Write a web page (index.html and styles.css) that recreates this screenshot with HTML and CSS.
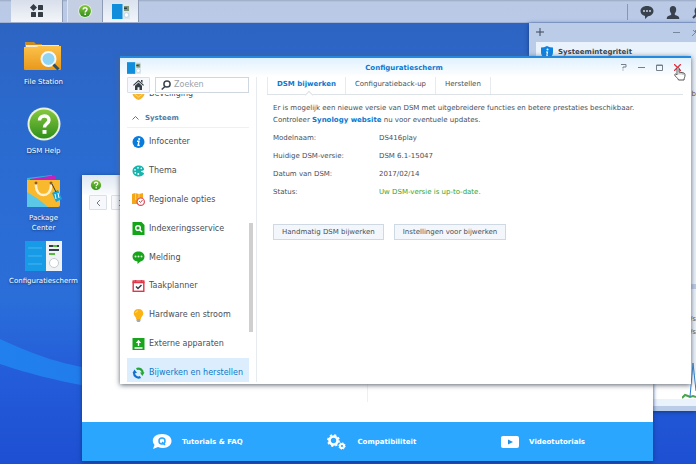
FILE: index.html
```html
<!DOCTYPE html>
<html lang="nl">
<head>
<meta charset="utf-8">
<meta name="viewport" content="width=device-width, initial-scale=1">
<title>Configuratiescherm</title>
<link rel="stylesheet" href="styles.css">
</head>
<body>
<svg class="defs" aria-hidden="true">
  <defs>
    <linearGradient id="green" x1="0" y1="0" x2="0" y2="1"><stop offset="0" stop-color="#86c83e"/><stop offset="1" stop-color="#2f8f1c"/></linearGradient>
    <linearGradient id="folder" x1="0" y1="0" x2="0" y2="1"><stop offset="0" stop-color="#fcc24a"/><stop offset="1" stop-color="#e9981b"/></linearGradient>
    <linearGradient id="wave" x1="0" y1="0" x2="1" y2="0"><stop offset="0" stop-color="#2180ee"/><stop offset="1" stop-color="#2373e6"/></linearGradient>
    <symbol id="help" viewBox="0 0 34 34"><circle cx="17" cy="17" r="16.5" fill="#e8f2df"/><circle cx="17" cy="17" r="14.5" fill="url(#green)"/><path d="M12.500 13.500c0-6 9.500-6 9.500-.5 0 3.800-4.500 3.500-4.500 7.500" fill="none" stroke="#fff" stroke-width="3.400"/><rect x="15.500" y="23" width="4" height="3.800" fill="#fff"/></symbol>
    <symbol id="panel" viewBox="0 0 37 30"><rect width="37" height="30" fill="#eef2f4"/><rect width="21" height="30" fill="#189be6"/><path d="M3 7h14M3 15h14M3 23h14" stroke="#47b6f0" stroke-width="1"/><path d="M24 5h10M24 9h10" stroke="#333e49" stroke-width="2"/><path d="M28 5h4M24 13h6" stroke="#54b93c" stroke-width="2"/><circle cx="29" cy="22" r="4.500" fill="#fff" stroke="#c3ccd2"/></symbol>
    <symbol id="panel-small" viewBox="0 0 18 15"><rect width="18" height="15" fill="#dde7ec"/><rect width="10.500" height="15" fill="#118edb"/><rect x="12" y="2" width="5" height="5" fill="#7d9477"/><rect x="12" y="3.500" width="3" height="1.500" fill="#333f48"/><circle cx="14.500" cy="11" r="2.300" fill="#fff" stroke="#a5c6d8" stroke-width=".6"/></symbol>
  </defs>
</svg>

<div class="desktop">
  <svg class="wallpaper" viewBox="0 0 696 464" preserveAspectRatio="none" aria-hidden="true"><path d="M0 339C35 355 63 366 110 371S220 380 280 360V390H110C60 382 30 374 0 364z" fill="url(#wave)"/></svg>

  <header class="taskbar">
    <button class="task task-main" aria-label="Hoofdmenu"><svg width="14" height="14" viewBox="0 0 14 14" fill="#343c46"><path d="M3.500 0 7 3.500 3.500 7 0 3.500z"/><rect x="8" y="1" width="5" height="5" rx=".6"/><rect x="1" y="8" width="5" height="5" rx=".6"/><rect x="8" y="8" width="5" height="5" rx=".6"/></svg></button>
    <button class="task task-help" aria-label="DSM Help"><svg width="14" height="14"><use href="#help"/></svg></button>
    <button class="task task-on" aria-label="Configuratiescherm"><svg width="18" height="15"><use href="#panel-small"/></svg></button>
    <div class="tray">
      <button class="plain" aria-label="Meldingen"><svg width="14" height="13" viewBox="0 0 14 13"><path d="M7 0c3.900 0 6.500 2.200 6.500 5S11 10 8 10.300L5 13v-3C2.300 9.500.5 7.600.5 5 .5 2.200 3.100 0 7 0z" fill="#39414c"/><g fill="#c7d3e5"><circle cx="4" cy="5" r="1"/><circle cx="7" cy="5" r="1"/><circle cx="10" cy="5" r="1"/></g></svg></button>
      <button class="plain" aria-label="Opties"><svg width="14" height="13" viewBox="0 0 14 13"><path d="M7 0c2 0 3.200 1.400 3.200 3.500S9.300 7 8.700 7.700c0 1.300.6 1.500 1.800 1.900 1.600.5 2.800 1 2.800 3.400H.7c0-2.400 1.200-2.900 2.800-3.400 1.200-.4 1.800-.6 1.800-1.900C4.700 7 3.800 5.600 3.800 3.500S5 0 7 0z" fill="#39414c"/></svg></button>
      <button class="plain tray-search" aria-label="Zoeken"><svg width="14" height="14" viewBox="0 0 14 14" fill="none" stroke="#39414c" stroke-width="2"><circle cx="8" cy="6" r="4.500"/><path d="m5 9-4 4"/></svg></button>
    </div>
  </header>

  <nav class="shortcuts" aria-label="Bureaublad">
    <a class="shortcut" href="#files"><svg width="38" height="32" viewBox="0 0 38 32"><path d="M1 2h9l2 2h6v3H1z" fill="#c98a20"/><path d="M2 5h33v5H2z" fill="#f4ead0"/><path d="M0 7h12l3-1h22v23q0 1-1 1H1q-1 0-1-1z" fill="url(#folder)"/><circle cx="24.500" cy="19" r="7" fill="#8fd4f2" stroke="#f4f8fa" stroke-width="2"/><path d="m29.500 24.500 5 5" stroke="#31505d" stroke-width="3"/></svg>File Station</a>
    <a class="shortcut" href="#help-app"><svg width="34" height="34"><use href="#help"/></svg>DSM Help</a>
    <a class="shortcut" href="#packages"><svg width="36" height="34" viewBox="0 0 36 34"><path d="m1 4 25-3v8H1z" fill="#28b8dc"/><path d="m4 5 26-4v9H4z" fill="#c322bd"/><path d="M1 6h33v25q0 2-2 2H3q-2 0-2-2z" fill="#f9b92e"/><path d="M1 18q11 6 21 15H1z" fill="#5bc8e8"/><path d="M10 9v3c0 12 15 12 15 0V9" fill="none" stroke="#fff2d4" stroke-width="2.500"/><circle cx="10" cy="9" r="1.500" fill="#8f5c12"/><circle cx="25" cy="9" r="1.500" fill="#8f5c12"/><path d="m26 19 6-3 4 9-6 3z" fill="#1ba4d8"/><path d="m29 20 1 5m2-6 1 5" stroke="#fff"/><path d="m26 10 4 8" stroke="#333"/></svg>Package<br>Center</a>
    <a class="shortcut" href="#control"><svg width="37" height="30"><use href="#panel"/></svg>Configuratiescherm</a>
  </nav>

  <aside class="widgets">
    <div class="widgets-bar"><button class="plain" aria-label="Toevoegen"><svg width="8" height="8" viewBox="0 0 8 8"><path d="M4 0v8M0 4h8" stroke="#3c4654"/></svg></button><button class="plain widgets-min" aria-label="Minimaliseren"><svg width="7" height="7" viewBox="0 0 7 7"><path d="M0 3.500h7" stroke="#76869b"/></svg></button><button class="plain" aria-label="Vastzetten"><svg width="8" height="8" viewBox="0 0 8 8"><path d="m0 8 3-3M1 2l5 5M3 3l3-3 2 2-3 3z" stroke="#76869b" fill="none"/></svg></button></div>
    <section class="card card-health"><svg width="12" height="13" viewBox="0 0 12 13"><path d="M6 0q3 1.500 6 1.500V6c0 4-3 6-6 7C3 12 0 10 0 6V1.500Q3 1.500 6 0z" fill="#0e82e0"/><circle cx="6.500" cy="3.500" r="1" fill="#fff"/><path d="M5 6h1.500L5.800 9.500H7" stroke="#fff" fill="none" stroke-width="1.200"/></svg><h2>Systeemintegriteit</h2><span class="sliver">b</span></section>
    <section class="card card-load"><div class="rates"><span>/s</span><span>/s</span></div><svg class="chart" width="14" height="38" viewBox="0 0 14 38" fill="none"><path d="m0 37 3-3 3 1 2 1 3-1 3 1" stroke="#49a34f" stroke-width="2"/><path d="M8 36 11 2l3 28" stroke="#2a7fd0"/></svg></section>
  </aside>

  <section class="window help-window" aria-label="DSM Help">
    <div class="help-title"><svg width="12" height="12"><use href="#help"/></svg></div>
    <div class="help-tools"><button class="square" aria-label="Vorige"><svg width="5" height="8" viewBox="0 0 5 8"><path d="M4 1 1 4l3 3" fill="none" stroke="#717983"/></svg></button><button class="square" aria-label="Volgende"><svg width="5" height="8" viewBox="0 0 5 8"><path d="m1 1 3 3-3 3" fill="none" stroke="#717983"/></svg></button></div>
    <div class="help-body"></div>
    <footer class="help-links">
      <a href="#faq"><svg width="20" height="16" viewBox="0 0 20 16"><path d="M10 0c6 0 9.500 3 9.500 7S16 14 11 14q-3 0-5-1l-5 2 1.500-4Q.8 9 .8 7c0-4 3.200-7 9.200-7z" fill="#fff"/><circle cx="10" cy="7" r="3" fill="none" stroke="#2aa6ff" stroke-width="1.500"/><path d="m10 8 3 3" stroke="#2aa6ff" stroke-width="1.500"/></svg>Tutorials &amp; FAQ</a>
      <a href="#compat"><svg width="20" height="16" viewBox="0 0 20 16" fill="none" stroke="#fff"><circle cx="6.500" cy="6.500" r="4" stroke-width="2.600"/><circle cx="6.500" cy="6.500" r="5.600" stroke-width="1.600" stroke-dasharray="2.200 2.200"/><circle cx="15" cy="12" r="2.100" stroke-width="2"/><circle cx="15" cy="12" r="3.200" stroke-width="1" stroke-dasharray="1.250 1.250"/></svg>Compatibiliteit</a>
      <a href="#video"><svg width="18" height="12" viewBox="0 0 18 12"><rect width="18" height="12" rx="2" fill="#fff"/><path d="m7 3.500 5 2.500-5 2.500z" fill="#2292e8"/></svg>Videotutorials</a>
    </footer>
  </section>

  <main class="window config">
    <header class="titlebar">
      <svg class="title-icon" width="14" height="12"><use href="#panel-small"/></svg>
      <h1>Configuratiescherm</h1>
      <div class="controls">
        <button class="plain" aria-label="Help"><svg width="7" height="7" viewBox="0 0 7 7"><path d="M1 .5h5v2.500H3v1.500M3 5.500v1" fill="none" stroke="#75808b"/></svg></button>
        <button class="plain" aria-label="Minimaliseren"><svg width="7" height="7" viewBox="0 0 7 7"><path d="M0 3.500h7" stroke="#75808b"/></svg></button>
        <button class="plain" aria-label="Maximaliseren"><svg width="7" height="7" viewBox="0 0 7 7"><path d="M.5 1h6v5.500h-6zM0 1.500h7" fill="none" stroke="#75808b"/></svg></button>
        <button class="plain close" aria-label="Sluiten"><svg width="7" height="7" viewBox="0 0 7 7"><path d="m0 0 7 7M7 0 0 7" stroke="#dc3442" stroke-width="1.300"/></svg><svg class="pointer" width="12" height="14" viewBox="0 0 12 14"><path d="M3 1.500c0-1.300 2-1.300 2 0V5l4 .8c1.500.2 2 1 2 2.200 0 2.500-1 3-1 5H4.500C4 11 1 9.500.7 8 .5 7 2 6.500 3 8z" fill="#fff" stroke="#444" stroke-width=".9"/><path d="M5 5v2.500M7 5.500v2M9 6v2" stroke="#555" stroke-width=".6"/></svg></button>
      </div>
    </header>
    <div class="config-body">
      <div class="sidebar">
        <div class="finder">
          <button class="square home" aria-label="Start"><svg width="11" height="10" viewBox="0 0 11 10" fill="#343c44"><path d="M5.500 0 11 5l-.8.800L5.500 1.600.8 5.800 0 5zM8 0h1.500v3L8 1.600z"/><path d="M5.500 2.600 9 5.800V10H6.500V7.300h-2V10H2V5.800z"/></svg></button>
          <div class="search"><svg width="10" height="10" viewBox="0 0 10 10" fill="none" stroke="#3c444c" stroke-width="1.500"><circle cx="6" cy="4" r="3.100"/><path d="M4 6.500.7 9.500"/></svg><input type="search" placeholder="Zoeken" aria-label="Zoeken"></div>
        </div>
        <nav class="menu" aria-label="Instellingen">
          <a class="item item-above" href="#sec"><svg width="12" height="12" viewBox="0 0 12 12"><path d="M6 0 12 2v4q-1 4-6 6-5-2-6-6V2z" fill="#f5b42d"/><path d="m2 6 4 3 4-3" fill="none" stroke="#f8d98c"/></svg>Beveiliging</a>
          <h2 class="group"><svg width="7" height="5" viewBox="0 0 7 5"><path d="m.5 4.500 3-3 3 3" fill="none" stroke="#68737d"/></svg>Systeem</h2>
          <div class="items">
            <a class="item" href="#info"><svg width="12" height="12" viewBox="0 0 12 12"><circle cx="6" cy="6" r="6" fill="#087cdd"/><circle cx="6.700" cy="3" r="1.100" fill="#fff"/><path d="M4.500 5.200h2L5.600 9.200h1.600" fill="none" stroke="#fff" stroke-width="1.400"/></svg>Infocenter</a>
            <a class="item" href="#thema"><svg width="12" height="12" viewBox="0 0 12 12"><path d="M6 .5c3 0 5.500 1.500 5.500 4 0 1.500-3 1-3 2s3 .5 3 2S9 11.500 6 11.500C2.500 11.500 0 9 0 6S2.500.5 6 .5z" fill="#17b3ad"/><g fill="#fff"><circle cx="5.500" cy="2.800" r=".9"/><circle cx="8.800" cy="3.400" r=".8"/><circle cx="2.500" cy="4.800" r=".9"/><circle cx="2.800" cy="7.800" r=".9"/><circle cx="5.800" cy="9" r="1"/></g></svg>Thema</a>
            <a class="item" href="#regio"><svg width="13" height="13" viewBox="0 0 13 13"><path d="m0 1 3-1 4 1 4-1v8l-3 3H0z" fill="#f5a817"/><path d="M3.500 0v7M7 1v5" stroke="#ffe0a0" stroke-width=".7"/><circle cx="8.700" cy="8.700" r="3.700" fill="#fff" stroke="#df4a56" stroke-width="1.200"/><path d="m7 8 1.500 1.500L10.500 7" fill="none" stroke="#c94652"/></svg>Regionale opties</a>
            <a class="item" href="#index"><svg width="12" height="13" viewBox="0 0 12 13"><path d="M0 0h9l3 3v10H0z" fill="#15a51a"/><circle cx="5.500" cy="6" r="2.300" fill="none" stroke="#fff" stroke-width="1.500"/><path d="m7.200 7.700 2.300 2.300" stroke="#fff" stroke-width="1.500"/></svg>Indexeringsservice</a>
            <a class="item" href="#melding"><svg width="12" height="13" viewBox="0 0 12 13"><path d="M6 .5c3.500 0 6 2 6 5s-2 4.700-4 5L5 13v-2.500C2 10.300 0 8.500 0 5.500s2.500-5 6-5z" fill="#16a51a"/><g fill="#d9f3d5"><circle cx="3" cy="5.500" r="1"/><circle cx="6" cy="5.500" r="1"/><circle cx="9" cy="5.500" r="1"/></g></svg>Melding</a>
            <a class="item" href="#taak"><svg width="12" height="12" viewBox="0 0 12 12"><rect x=".7" y="1" width="10.600" height="10.300" fill="#fff" stroke="#df3748" stroke-width="1.400"/><path d="M0 2.500h12M3 0v3M9 0v3" stroke="#df3748" stroke-width="1.500"/><path d="m3.500 6.500 2 2 3.500-3.500" fill="none" stroke="#343c44" stroke-width="1.500"/></svg>Taakplanner</a>
            <a class="item" href="#hardware"><svg width="12" height="13" viewBox="0 0 12 13"><path d="M6 0c3 0 4.800 2 4.800 4.500C10.800 7 8.500 7.700 8.300 10H3.700C3.500 7.700 1.200 7 1.200 4.500 1.200 2 3 0 6 0z" fill="#fcb316"/><path d="M3 4q.5-2 2.500-2.200" fill="none" stroke="#ffe08a"/><path d="M4 10h4v2l-1 1H5l-1-1z" fill="#a4a9ad"/></svg>Hardware en stroom</a>
            <a class="item" href="#extern"><svg width="12" height="12" viewBox="0 0 12 12"><path d="M0 0h12v12H0z" fill="#18a51c"/><path d="M2 10h8M6 2.500V8" stroke="#fff" stroke-width="1.400"/><path d="m3.300 5 2.700-3 2.700 3z" fill="#fff"/></svg>Externe apparaten</a>
            <a class="item item-on" href="#update" aria-current="page"><svg width="12" height="12" viewBox="0 0 12 12" fill="none" stroke-width="2.200"><path d="M4 2a4.300 4.300 0 0 1 6.200 4" stroke="#27a536"/><path d="M8 10a4.300 4.300 0 0 1-6.300-4.500" stroke="#1272cf"/><path d="M7.500 5.500H12L9.800 9z" fill="#27a536"/><path d="M0 6 2 2.500 4.500 6z" fill="#1272cf"/></svg>Bijwerken en herstellen</a>
          </div>
        </nav>
      </div>
      <div class="scroll"><div class="thumb"></div></div>
      <div class="content">
        <div class="tabs" role="tablist"><button class="tab tab-on" role="tab" aria-selected="true">DSM bijwerken</button><button class="tab" role="tab">Configuratieback-up</button><button class="tab" role="tab">Herstellen</button></div>
        <div class="page">
          <p>Er is mogelijk een nieuwe versie van DSM met uitgebreidere functies en betere prestaties beschikbaar.<br>Controleer <a href="#synology">Synology website</a> nu voor eventuele updates.</p>
          <dl><dt>Modelnaam:</dt><dd>DS416play</dd><dt>Huidige DSM-versie:</dt><dd>DSM 6.1-15047</dd><dt>Datum van DSM:</dt><dd>2017/02/14</dd><dt>Status:</dt><dd class="ok">Uw DSM-versie is up-to-date.</dd></dl>
          <div class="actions"><button class="button">Handmatig DSM bijwerken</button><button class="button">Instellingen voor bijwerken</button></div>
        </div>
      </div>
    </div>
  </main>
</div>
</body>
</html>
```
FILE: styles.css
```css
* { box-sizing: border-box; }
body, h1, h2, p, dl, dd { margin: 0; }
body { font: 7px/12px "DejaVu Sans", Verdana, sans-serif; color: #484f57; }
button, input { font: inherit; color: inherit; padding: 0; }
a { color: inherit; text-decoration: none; }
h1, h2 { font-size: 7px; line-height: 12px; }
svg { display: block; flex: none; }
.defs { position: absolute; width: 0; height: 0; }
.plain { border: 0; background: none; }

.desktop { position: relative; min-height: 100vh; overflow: hidden; background: linear-gradient(#2d64c2 5%, #2a6bd0 30%, #2a6ed9 65%, #245dda 80%, #1d4fd2); }
.wallpaper { position: absolute; inset: 0; width: 100%; height: 100%; }

.taskbar { position: relative; display: flex; height: 23px; padding-left: 11px; background: linear-gradient(#98a8c5, #bac9e4 2px, #b9cae8); border-bottom: 1px solid #9fb2d6; }
.task { display: flex; align-items: center; justify-content: center; width: 36px; border: 0; border-right: 1px solid #8e9cb6; background: #c4cfe3; }
.task-main { width: 52px; margin-right: 4px; background: linear-gradient(#d8dfeb, #f3f5f9); }
.task-help { border-left: 1px solid #dfe7f3; }
.task-on { background: linear-gradient(#dae2ef, #f2f5fa); }
.tray { display: flex; align-items: center; gap: 12px; margin: 4px 0 2px auto; padding-left: 12px; border-left: 1px solid #8797b2; }
.tray-search { width: 4px; overflow: hidden; }

.shortcuts { position: relative; display: grid; grid-auto-rows: 67px; justify-items: center; align-items: start; width: 87px; padding-top: 17px; }
.shortcut { display: flex; flex-direction: column; align-items: center; gap: 5px; line-height: 10px; color: #fff; text-align: center; text-shadow: 0 1px 2px #12336f; white-space: nowrap; }

.widgets { position: absolute; top: 23px; right: 0; bottom: 53px; width: 167px; display: flex; flex-direction: column; gap: 5px; padding: 0 0 5px 7px; background: #bacce8; box-shadow: 0 1px 4px #12397c; }
.widgets-bar { display: flex; align-items: center; gap: 12px; height: 14px; padding-top: 4px; }
.widgets-min { margin-left: auto; }
.widgets-bar .plain:last-child { width: 4px; overflow: hidden; }
.card { position: relative; background: #eaf2fb; }
.card-health { display: flex; gap: 5px; height: 242px; padding: 4px 5px; }
.card-health h2 { color: #38434e; }
.sliver { align-self: flex-start; margin: 42px -5px 0 auto; }
.card-load { flex: 1; display: flex; flex-direction: column; align-items: flex-end; padding-top: 24px; overflow: hidden; background: linear-gradient(#eaf2fb 86px, #fff 86px, #fff 110px, #eaf2fb 110px); }
.rates { display: flex; flex-direction: column; line-height: 13px; }
.chart { margin-top: auto; margin-bottom: 7px; }

.window { position: absolute; display: flex; flex-direction: column; background: #fff; }
.help-window { top: 175px; right: 43px; bottom: 3px; left: 82px; box-shadow: 0 1px 4px #14367c; }
.help-title { height: 20px; padding: 4px 8px; background: linear-gradient(#dfe7f1, #fafcfe); }
.help-tools { display: flex; gap: 4px; padding-left: 7px; }
.square { display: flex; align-items: center; justify-content: center; width: 18px; height: 15px; border: 1px solid #d8e0e8; border-radius: 1px; background: #f6f8fb; }
.help-body { flex: 1; width: 50%; border-right: 1px solid #edf0f3; margin-bottom: 20px; }
.help-links { display: flex; justify-content: space-between; height: 39px; padding: 0 68px 0 70px; background: #2aa6ff; color: #fff; font-weight: bold; }
.help-links a { display: flex; align-items: center; gap: 10px; }

.config { top: 56px; right: 5px; bottom: 80px; left: 120px; border-top: 2px solid #2589df; box-shadow: 0 1px 5px #5a6470; }
.titlebar { display: grid; grid-template-columns: 1fr auto 1fr; align-items: center; height: 19px; padding: 0 10px 0 7px; background: linear-gradient(#e0f1fe, #fff); }
.titlebar h1 { color: #0b78cf; }
.controls { display: flex; justify-content: flex-end; gap: 11px; }
.close { position: relative; }
.pointer { position: absolute; top: 3px; left: 0; }
.config-body { display: flex; flex: 1; min-height: 0; padding-bottom: 2px; }
.sidebar { display: flex; flex-direction: column; width: 129px; padding-left: 7px; font-size: 8px; }
.finder { display: flex; gap: 5px; height: 17px; }
.home { width: 23px; height: 16px; }
.search { display: flex; flex: 1; align-items: center; gap: 3px; min-width: 0; height: 16px; padding-left: 5px; border: 1px solid #cfd7df; background: #fff; }
.search input { width: 100%; min-width: 0; border: 0; outline: 0; background: none; appearance: none; }
.search input::placeholder { color: #9aa1a8; }
.menu { flex: 1; min-height: 0; overflow: hidden; }
.item { display: flex; align-items: center; gap: 4px; padding-left: 5px; white-space: nowrap; }
.item svg { width: 13px; }
.item-above { height: 29px; margin-top: -15px; }
.group { display: flex; align-items: center; gap: 6px; height: 20px; padding-left: 5px; border-bottom: 1px solid #edf1f5; color: #4c7ea8; }
.items { display: flex; flex-direction: column; height: 259px; }
.items .item { flex: 1; }
.item-on { background: #dceefd; color: #0b78c8; }
.scroll { width: 8px; padding-top: 146px; border-right: 1px solid #e6ebf0; }
.thumb { width: 4px; height: 109px; background: #cfcfcf; }
.content { flex: 1; min-width: 0; padding: 0 8px 0 10px; }
.tabs { display: flex; height: 18px; border-bottom: 1px solid #dde2e6; }
.tab { position: relative; padding: 0 9px 3px; border: 0; border-right: 1px solid #e7ebee; background: none; white-space: nowrap; }
.tab-on { border-left: 1px solid #e7ebee; color: #0b78cf; font-weight: bold; }
.tab-on::after { content: ""; position: absolute; bottom: -4px; left: 50%; width: 5px; height: 5px; border: solid #dde2e6; border-width: 1px 0 0 1px; background: #fff; transform: rotate(45deg); }
.page { padding: 7px 0 0 6px; white-space: nowrap; }
.page p a { color: #0b78cf; font-weight: bold; }
dl { display: grid; grid-template-columns: 106px 1fr; grid-auto-rows: 18px; align-items: center; padding-top: 3px; }
.ok { color: #35a52b; }
.actions { display: flex; gap: 10px; padding-top: 23px; }
.button { height: 16px; padding: 0 8px; border: 1px solid #ced9e3; background: #f3f7fb; white-space: nowrap; }
```
